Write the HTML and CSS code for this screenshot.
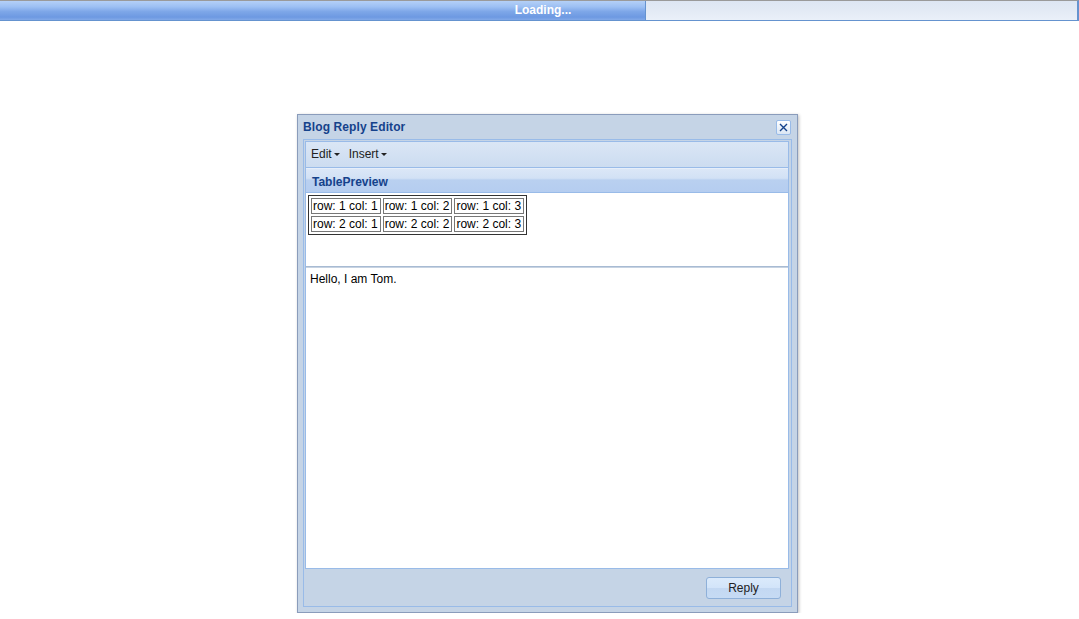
FILE: index.html
```html
<!DOCTYPE html>
<html>
<head>
<meta charset="utf-8">
<link rel="stylesheet" href="styles.css">
</head>
<body>
<div class="progress">
  <div class="progress-fill"></div>
  <div class="progress-rest"></div>
  <div class="progress-text">Loading...</div>
</div>
<div class="win">
  <div class="win-head">
    <span class="win-title">Blog Reply Editor</span>
    <span class="win-close">
      <svg width="9" height="9" viewBox="0 0 9 9"><path d="M1 1 L8 8 M8 1 L1 8" stroke="#15428b" stroke-width="1.4" fill="none"/></svg>
    </span>
  </div>
  <div class="win-body">
    <div class="panel">
      <div class="toolbar">
        <span class="tb-item">Edit<i class="caret"></i></span>
        <span class="tb-item">Insert<i class="caret"></i></span>
      </div>
      <div class="preview-head">TablePreview</div>
      <div class="preview-body">
        <table class="grid">
          <tr><td>row: 1 col: 1</td><td>row: 1 col: 2</td><td>row: 1 col: 3</td></tr>
          <tr><td>row: 2 col: 1</td><td>row: 2 col: 2</td><td>row: 2 col: 3</td></tr>
        </table>
      </div>
      <div class="editor">Hello, I am Tom.</div>
    </div>
    <div class="footer">
      <button class="btn">Reply</button>
    </div>
  </div>
</div>
</body>
</html>
```

FILE: styles.css
```css
html, body {
  margin: 0;
  padding: 0;
  background: #ffffff;
  font-family: "Liberation Sans", Arial, sans-serif;
  font-size: 12px;
}

.progress {
  position: relative;
  display: flex;
  height: 19px;
  border-top: 1px solid #9a9a9a;
  border-bottom: 1px solid #6593cf;
  border-right: 2px solid #6593cf;
}
.progress-fill {
  width: 645px;
  background: linear-gradient(to bottom, #b4d0f7 0%, #9dc0f3 30%, #7ea7e8 55%, #6d99e2 85%, #82a9e8 100%);
  border-right: 1px solid #6593cf;
}
.progress-rest {
  flex: 1;
  background: linear-gradient(to bottom, #dde6f3 0%, #e3eaf5 50%, #eaf0f9 100%);
}
.progress-text {
  position: absolute;
  left: 0;
  right: 0;
  top: 0;
  line-height: 19px;
  text-align: center;
  padding-left: 9px;
  color: #ffffff;
  font-weight: bold;
  font-size: 12px;
}

.win {
  width: 499px;
  height: 497px;
  margin: 93px 0 0 297px;
  border: 1px solid #8a9cbb;
  background: #c5d4e6;
  box-shadow: 1px 1px 3px rgba(0, 0, 0, 0.25);
  display: flex;
  flex-direction: column;
}
.win-head {
  height: 24px;
  display: flex;
  align-items: center;
  justify-content: space-between;
  padding: 0 6px 0 6px;
}
.win-title {
  font-weight: bold;
  font-size: 12px;
  color: #15428b;
  margin-left: -1px;
  letter-spacing: 0.1px;
}
.win-close {
  width: 13px;
  height: 13px;
  border: 1px solid #99bbe8;
  border-radius: 2px;
  background: linear-gradient(to bottom, #ffffff, #dbe6f4);
  display: flex;
  align-items: center;
  justify-content: center;
}
.win-body {
  flex: 1;
  margin: 0 5px 5px 5px;
  border: 1px solid #99bbe8;
  padding: 1px 1px 0 1px;
  display: flex;
  flex-direction: column;
}
.panel {
  flex: 1;
  border: 1px solid #99bbe8;
  display: flex;
  flex-direction: column;
  background: #ffffff;
  margin-right: 1px;
}
.toolbar {
  border-bottom: 1px solid #99bbe8;
  background: linear-gradient(to bottom, #dae6f5 0%, #d3e1f3 50%, #ccdcf0 100%);
  display: flex;
  align-items: center;
  padding-left: 5px;
  padding-bottom: 1px;
  box-sizing: border-box;
  height: 26px;
  gap: 9px;
}
.tb-item {
  color: #222;
  font-size: 12px;
  display: flex;
  align-items: center;
}
.caret {
  display: inline-block;
  width: 0;
  height: 0;
  margin-left: 2px;
  margin-top: 1px;
  border-left: 3px solid transparent;
  border-right: 3px solid transparent;
  border-top: 3px solid #222;
}
.preview-head {
  border-bottom: 1px solid #99bbe8;
  background: linear-gradient(to bottom, #dbe7f7 0%, #d2e1f5 40%, #b9d0f0 48%, #b5cdf0 100%);
  border-top: 1px solid #e6eefa;
  box-sizing: border-box;
  height: 25px;
  display: flex;
  align-items: center;
  padding-left: 6px;
  padding-top: 2px;
  font-weight: bold;
  font-size: 12px;
  color: #15428b;
}
.preview-body {
  height: 74px;
  border-bottom: 1px solid #a8bbd3;
  padding: 2px 0 0 2px;
  box-sizing: border-box;
  background: #fff;
}
.grid {
  border: 1px solid #333;
  border-spacing: 2px;
  font-size: 12px;
  color: #000;
}
.grid td {
  border: 1px solid #777;
  padding: 0 2px 0 1px;
  line-height: 14px;
  white-space: nowrap;
}
.editor {
  flex: 1;
  border-top: 1px solid #c7d3e2;
  padding: 4px 4px;
  color: #000;
  font-size: 12px;
  background: #fff;
}
.footer {
  height: 37px;
  display: flex;
  align-items: center;
  justify-content: flex-end;
  padding-right: 9px;
}
.btn {
  width: 75px;
  height: 22px;
  border: 1px solid #8eb0d9;
  border-radius: 3px;
  background: linear-gradient(to bottom, #dbeafb 0%, #d2e4f9 50%, #c3d8f2 52%, #c6dbf4 100%);
  font-family: "Liberation Sans", Arial, sans-serif;
  font-size: 12px;
  color: #222;
  padding: 0;
}
```
